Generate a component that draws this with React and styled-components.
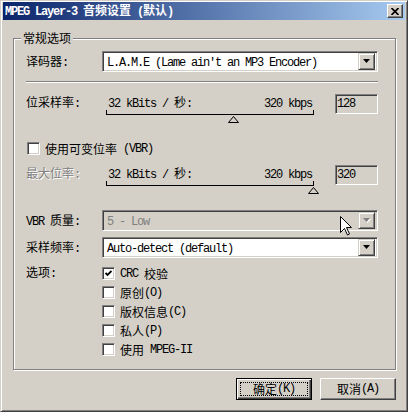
import React from 'react';
import styled, { createGlobalStyle } from 'styled-components';

const GlobalStyle = createGlobalStyle`
  html, body { margin: 0; padding: 0; background: #d4d0c8; }
  body {
    font-family: "Noto Sans CJK SC", "Liberation Sans", sans-serif;
    font-size: 12px;
    line-height: 14px;
    color: #000;
  }
  * { box-sizing: border-box; }
`;

const Lat = styled.span`
  font-family: "Liberation Mono", "DejaVu Sans Mono", monospace;
  font-size: 12px;
  letter-spacing: -1.2px;
`;

const CJK = /[\u2E80-\u9FFF\uF900-\uFAFF\uFF00-\uFFEF\u3000-\u303F]/;

function T({ children }) {
  const s = String(children);
  const parts = [];
  let cur = '';
  let curCjk = null;
  for (const ch of s) {
    const c = CJK.test(ch);
    if (curCjk === null || c === curCjk) cur += ch;
    else {
      parts.push([cur, curCjk]);
      cur = ch;
    }
    curCjk = c;
  }
  if (cur) parts.push([cur, curCjk]);
  return parts.map(([t, c], i) =>
    c ? <React.Fragment key={i}>{t}</React.Fragment> : <Lat key={i}>{t}</Lat>
  );
}

const Window = styled.div`
  position: relative;
  width: 408px;
  height: 412px;
  background: #d4d0c8;
  border: 1px solid;
  border-color: #d4d0c8 #404040 #404040 #d4d0c8;
  box-shadow: inset 1px 1px #fff, inset -1px -1px #808080;
  padding: 1px 2px 2px 2px;
  display: flex;
  flex-direction: column;
`;

const TitleBar = styled.div`
  height: 18px;
  flex: none;
  display: flex;
  align-items: center;
  justify-content: space-between;
  padding: 0 2px 0 2px;
  background: linear-gradient(to right, #0a246a, #a6caf0);
  color: #fff;
  font-weight: bold;
  white-space: pre;
`;

const CloseButton = styled.div`
  width: 16px;
  height: 14px;
  display: flex;
  align-items: center;
  justify-content: center;
  background: #d4d0c8;
  border: 1px solid;
  border-color: #fff #404040 #404040 #fff;
  box-shadow: inset -1px -1px #808080;
`;

const Body = styled.div`
  flex: 1;
  display: flex;
  flex-direction: column;
  padding: 18px 9px 0 10px;
`;

const Group = styled.div`
  position: relative;
  height: 332px;
  border: 1px solid #808080;
  box-shadow: inset 1px 1px #fff, 1px 1px #fff;
  padding: 12px 17px 0 12px;
  display: flex;
  flex-direction: column;
`;

const Legend = styled.div`
  position: absolute;
  top: -8px;
  left: 7px;
  padding: 0 2px;
  background: #d4d0c8;
  white-space: pre;
`;

const Row = styled.div`
  display: flex;
  align-items: center;
  height: ${(p) => p.$h || 21}px;
  margin-top: ${(p) => p.$mt || 0}px;
`;

const TopRow = styled.div`
  display: flex;
  align-items: flex-start;
  margin-top: ${(p) => p.$mt || 0}px;
`;

const Label = styled.div`
  width: 76px;
  flex: none;
  white-space: pre;
  padding-top: ${(p) => p.$pt || 0}px;
  color: ${(p) => (p.$disabled ? '#808080' : '#000')};
  text-shadow: ${(p) => (p.$disabled ? '1px 1px #fff' : 'none')};
`;

const Combo = styled.div`
  flex: 1;
  height: 21px;
  display: flex;
  align-items: center;
  background: ${(p) => (p.$disabled ? '#d4d0c8' : '#fff')};
  border: 1px solid;
  border-color: #808080 #fff #fff #808080;
  box-shadow: inset 1px 1px #404040, inset -1px -1px #d4d0c8;
  padding: 2px 2px 2px 4px;
`;

const ComboText = styled.div`
  flex: 1;
  white-space: pre;
  color: ${(p) => (p.$disabled ? '#808080' : '#000')};
`;

const DropButton = styled.div`
  width: 17px;
  height: 17px;
  flex: none;
  display: flex;
  align-items: center;
  justify-content: center;
  background: #d4d0c8;
  border: 1px solid;
  border-color: #d4d0c8 #404040 #404040 #d4d0c8;
  box-shadow: inset 1px 1px #fff, inset -1px -1px #808080;
`;

const Separator = styled.div`
  height: 2px;
  margin-top: 9px;
  border-top: 1px solid #808080;
  border-bottom: 1px solid #fff;
`;

const SliderArea = styled.div`
  position: relative;
  width: 208px;
  margin-left: 4px;
  flex: none;
`;

const SliderLabels = styled.div`
  display: flex;
  justify-content: space-between;
  padding: 1px 2px 0 2px;
  height: 15px;
  white-space: pre;
`;

const Track = styled.div`
  position: relative;
  height: 5px;
  margin-top: 1px;
  border-left: 1px solid #000;
  border-right: 1px solid #000;
  border-bottom: 1px solid #000;
`;

const Thumb = styled.svg`
  position: absolute;
  top: 6px;
  width: 11px;
  height: 7px;
  margin-left: -5.5px;
`;

const Edit = styled.div`
  width: 43px;
  height: 20px;
  flex: none;
  margin-left: auto;
  display: flex;
  align-items: center;
  padding: 0 1px;
  white-space: pre;
  background: #d4d0c8;
  border: 1px solid;
  border-color: #808080 #fff #fff #808080;
  box-shadow: inset 1px 1px #404040, inset -1px -1px #d4d0c8;
`;

const CheckRow = styled.div`
  display: flex;
  align-items: center;
  height: 19px;
  margin-top: ${(p) => p.$mt || 0}px;
  padding-left: ${(p) => p.$pl || 0}px;
  white-space: pre;
`;

const Box = styled.div`
  width: 13px;
  height: 13px;
  flex: none;
  margin-right: 5px;
  display: flex;
  align-items: center;
  justify-content: center;
  background: #fff;
  border: 1px solid;
  border-color: #808080 #fff #fff #808080;
  box-shadow: inset 1px 1px #404040, inset -1px -1px #d4d0c8;
`;

const CheckList = styled.div`
  display: flex;
  flex-direction: column;
`;

const ButtonRow = styled.div`
  display: flex;
  justify-content: flex-end;
  gap: 8px;
  margin-top: 8px;
`;

const Button = styled.div`
  position: relative;
  width: 76px;
  height: 22px;
  display: flex;
  align-items: center;
  justify-content: center;
  white-space: pre;
  background: #d4d0c8;
  border: 1px solid;
  border-color: ${(p) => (p.$default ? '#000' : '#fff #404040 #404040 #fff')};
  box-shadow: ${(p) =>
    p.$default
      ? 'inset 1px 1px #fff, inset -1px -1px #404040, inset -2px -2px #808080'
      : 'inset -1px -1px #808080'};
`;

const Focus = styled.div`
  position: absolute;
  inset: 3px;
  border: 1px dotted #000;
`;

const Cursor = styled.svg`
  position: absolute;
  left: 339px;
  top: 215px;
  width: 12px;
  height: 20px;
`;

const STEPS = [32, 40, 48, 56, 64, 80, 96, 112, 128, 160, 192, 224, 256, 320];

function Slider({ value }) {
  const idx = STEPS.indexOf(value);
  const frac = idx / (STEPS.length - 1);
  return (
    <SliderArea>
      <SliderLabels>
        <span><T>32 kBits / 秒:</T></span>
        <span><T>320 kbps</T></span>
      </SliderLabels>
      <Track>
        <Thumb viewBox="0 0 11 7" style={{ left: `${frac * 206}px` }}>
          <polygon points="5.5,0.5 10.5,6.5 0.5,6.5" fill="#d4d0c8" stroke="#000" strokeWidth="1" />
        </Thumb>
      </Track>
    </SliderArea>
  );
}

function Arrow({ disabled }) {
  return (
    <svg width="8" height="5" viewBox="0 0 8 5">
      {disabled && <polygon points="1,1 8,1 4.5,5" fill="#fff" />}
      <polygon points="0,0 7,0 3.5,4" fill={disabled ? '#808080' : '#000'} />
    </svg>
  );
}

function ComboBox({ text, disabled }) {
  return (
    <Combo $disabled={disabled}>
      <ComboText $disabled={disabled}><T>{text}</T></ComboText>
      <DropButton>
        <Arrow disabled={disabled} />
      </DropButton>
    </Combo>
  );
}

function Check({ checked }) {
  return (
    <Box>
      {checked && (
        <svg width="7" height="7" viewBox="0 0 7 7">
          <polyline points="0.5,3 2.5,5 6.5,1" fill="none" stroke="#000" strokeWidth="1.8" />
        </svg>
      )}
    </Box>
  );
}

const OPTIONS = [
  { text: 'CRC 校验', checked: true },
  { text: '原创(O)' },
  { text: '版权信息(C)' },
  { text: '私人(P)' },
  { text: '使用 MPEG-II' },
];

export default function App() {
  return (
    <>
      <GlobalStyle />
      <Window>
        <TitleBar>
          <span><T>MPEG Layer-3 音频设置 (默认)</T></span>
          <CloseButton>
            <svg width="8" height="7" viewBox="0 0 8 7">
              <path d="M0.5 0 L7.5 7 M7.5 0 L0.5 7" stroke="#000" strokeWidth="1.7" />
            </svg>
          </CloseButton>
        </TitleBar>
        <Body>
          <Group>
            <Legend>常规选项</Legend>
            <Row>
              <Label><T>译码器:</T></Label>
              <ComboBox text="L.A.M.E (Lame ain't an MP3 Encoder)" />
            </Row>
            <Separator />
            <TopRow $mt={11}>
              <Label $pt={1}><T>位采样率:</T></Label>
              <Slider value={128} />
              <Edit><T>128</T></Edit>
            </TopRow>
            <CheckRow $mt={24} $pl={1}>
              <Check />
              <T>使用可变位率 (VBR)</T>
            </CheckRow>
            <TopRow $mt={7}>
              <Label $pt={1} $disabled><T>最大位率:</T></Label>
              <Slider value={320} />
              <Edit><T>320</T></Edit>
            </TopRow>
            <Row $mt={24}>
              <Label><T>VBR 质量:</T></Label>
              <ComboBox text="5 - Low" disabled />
            </Row>
            <Row $mt={6}>
              <Label><T>采样频率:</T></Label>
              <ComboBox text="Auto-detect (default)" />
            </Row>
            <TopRow $mt={6}>
              <Label $pt={1}><T>选项:</T></Label>
              <CheckList>
                {OPTIONS.map((o) => (
                  <CheckRow key={o.text}>
                    <Check checked={o.checked} />
                    <T>{o.text}</T>
                  </CheckRow>
                ))}
              </CheckList>
            </TopRow>
          </Group>
          <ButtonRow>
            <Button $default>
              <Focus />
              <T>确定(K)</T>
            </Button>
            <Button>
              <T>取消(A)</T>
            </Button>
          </ButtonRow>
        </Body>
        <Cursor viewBox="0 0 12 20">
          <polygon
            points="0.5,0.5 0.5,16.5 4.5,12.5 7.5,19 9.5,18 6.5,11.5 11.5,11.5"
            fill="#fff"
            stroke="#000"
            strokeWidth="1"
          />
        </Cursor>
      </Window>
    </>
  );
}
